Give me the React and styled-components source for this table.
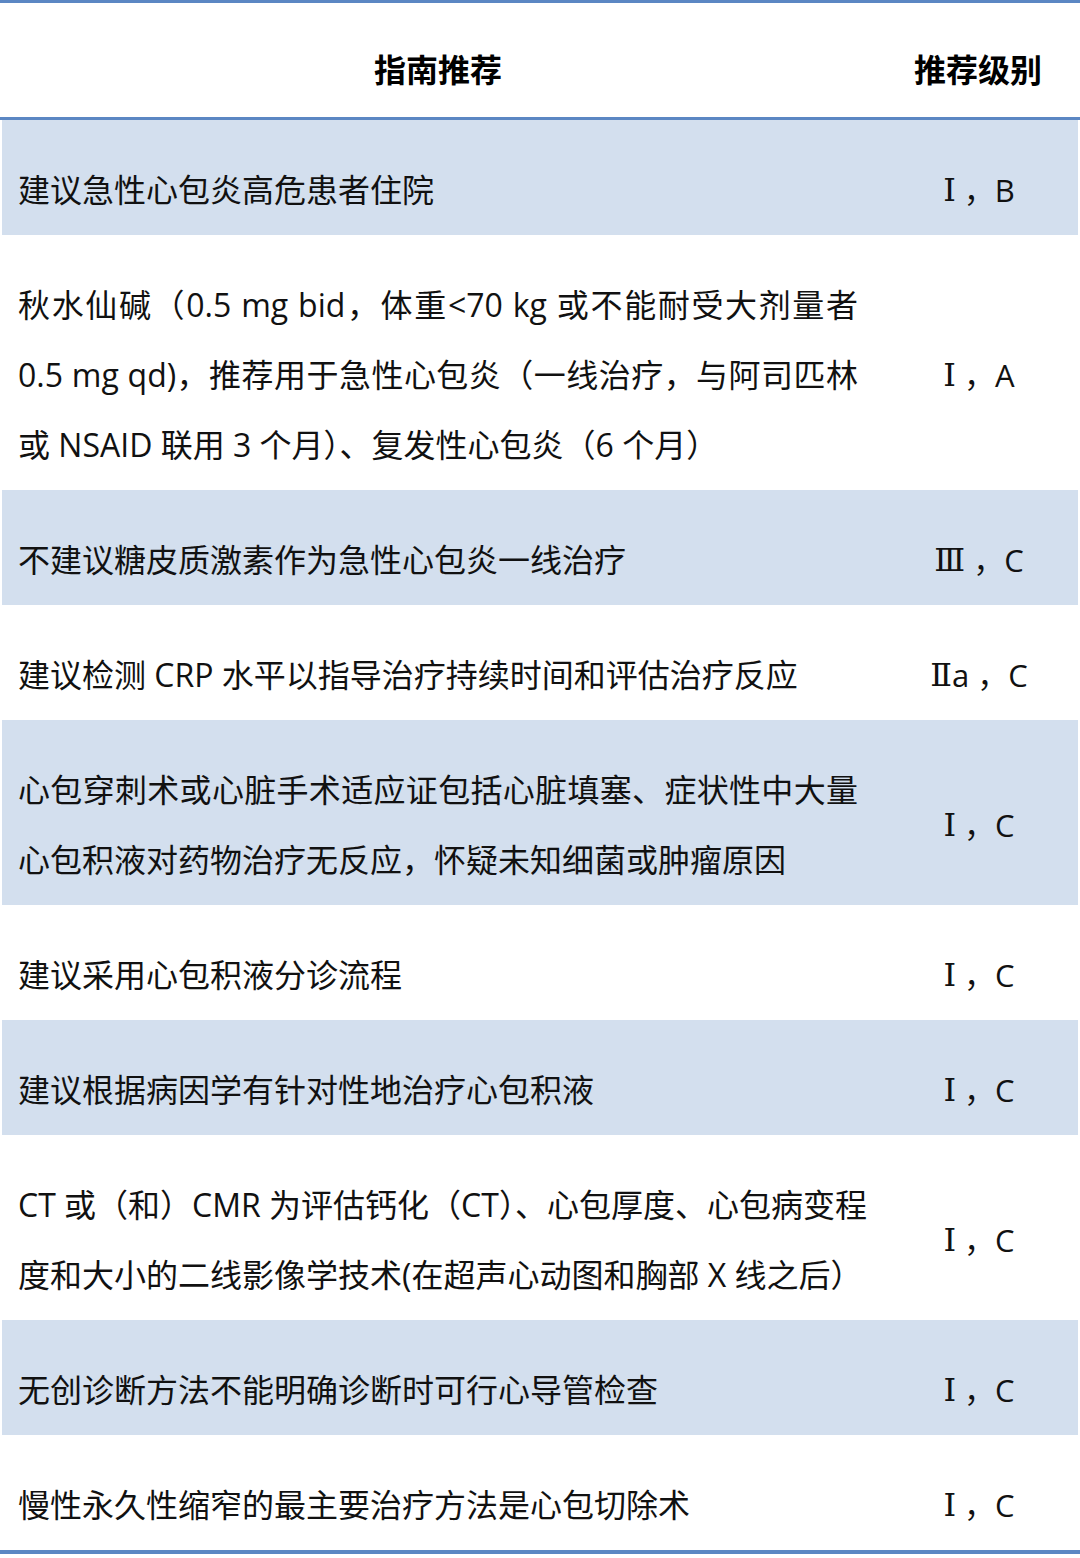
import React from 'react';
import styled, { createGlobalStyle } from 'styled-components';

const GlobalStyle = createGlobalStyle`
	html, body {
		margin: 0;
		padding: 0;
		background: #ffffff;
	}
	body {
		font-family: "Open Sans", "Noto Sans CJK SC", sans-serif;
		color: #111111;
	}
`;

const borderBlue = '#5b87c3';
const rowBlue = '#d3dfee';

const Page = styled.div`
	width: 1080px;
	height: 1558px;
	background: #ffffff;
`;

const Table = styled.div`
	display: grid;
	grid-template-columns: 876px 1fr;
	border-top: 3px solid ${borderBlue};
	border-bottom: 4px solid ${borderBlue};
`;

const HeadCell = styled.div`
	height: 117px;
	box-sizing: border-box;
	padding-top: 16px;
	display: flex;
	align-items: center;
	justify-content: center;
	font-family: "Noto Sans CJK SC", sans-serif;
	font-weight: 700;
	font-size: 32px;
	color: #000;
	border-bottom: 3px solid ${borderBlue};
`;

const TextCell = styled.div`
	background: ${({ $shaded }) => ($shaded ? rowBlue : '#ffffff')};
	margin-left: 2px;
	padding: 35px 18px 10px 16px;
	font-size: 32px;
	line-height: 70px;
	white-space: nowrap;
	min-width: 0;
`;

const Line = styled.div`
	width: 840px;
	height: 70px;
	white-space: nowrap;
	text-align: ${({ $justify }) => ($justify ? 'justify' : 'left')};
	text-align-last: ${({ $justify }) => ($justify ? 'justify' : 'auto')};
`;

const GradeCell = styled.div`
	background: ${({ $shaded }) => ($shaded ? rowBlue : '#ffffff')};
	margin-right: 2px;
	padding: 35px 0 10px 4px;
	display: flex;
	align-items: center;
	justify-content: center;
	font-size: 31px;
	line-height: 70px;
	white-space: pre;
`;

const Numeral = styled.span`
	font-family: "DejaVu Serif", "Liberation Serif", serif;
	font-size: 32px;
`;

const rows = [
	{ lines: ['建议急性心包炎高危患者住院'], level: 'Ⅰ', rest: ' ，B' },
	{
		lines: [
			'秋水仙碱（0.5 mg bid，体重<70 kg 或不能耐受大剂量者',
			'0.5 mg qd)，推荐用于急性心包炎（一线治疗，与阿司匹林',
			'或 NSAID 联用 3 个月）、复发性心包炎（6 个月）',
		],
		level: 'Ⅰ',
		rest: ' ，A',
	},
	{ lines: ['不建议糖皮质激素作为急性心包炎一线治疗'], level: 'Ⅲ', rest: ' ，C' },
	{ lines: ['建议检测 CRP 水平以指导治疗持续时间和评估治疗反应'], level: 'Ⅱ', rest: 'a ，C' },
	{
		lines: [
			'心包穿刺术或心脏手术适应证包括心脏填塞、症状性中大量',
			'心包积液对药物治疗无反应，怀疑未知细菌或肿瘤原因',
		],
		level: 'Ⅰ',
		rest: ' ，C',
	},
	{ lines: ['建议采用心包积液分诊流程'], level: 'Ⅰ', rest: ' ，C' },
	{ lines: ['建议根据病因学有针对性地治疗心包积液'], level: 'Ⅰ', rest: ' ，C' },
	{
		lines: [
			'CT 或（和）CMR 为评估钙化（CT）、心包厚度、心包病变程',
			'度和大小的二线影像学技术(在超声心动图和胸部 X 线之后）',
		],
		level: 'Ⅰ',
		rest: ' ，C',
	},
	{ lines: ['无创诊断方法不能明确诊断时可行心导管检查'], level: 'Ⅰ', rest: ' ，C' },
	{ lines: ['慢性永久性缩窄的最主要治疗方法是心包切除术'], level: 'Ⅰ', rest: ' ，C' },
];

export default function App() {
	return (
		<Page>
			<GlobalStyle />
			<Table>
				<HeadCell>指南推荐</HeadCell>
				<HeadCell>推荐级别</HeadCell>
				{rows.map((row, i) => (
					<React.Fragment key={i}>
						<TextCell $shaded={i % 2 === 0}>
							{row.lines.map((line, j) => (
								<Line key={j} $justify={j < row.lines.length - 1}>
									{line}
								</Line>
							))}
						</TextCell>
						<GradeCell $shaded={i % 2 === 0}>
							<Numeral>{row.level}</Numeral>
							{row.rest}
						</GradeCell>
					</React.Fragment>
				))}
			</Table>
		</Page>
	);
}
